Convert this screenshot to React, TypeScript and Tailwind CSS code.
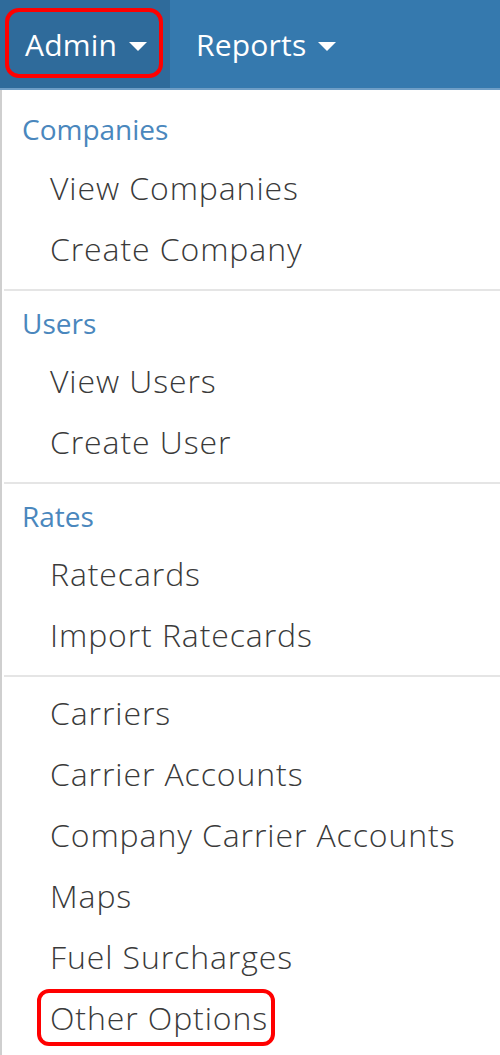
import { ReactNode } from "react";

function Caret() {
  return (
    <svg width="18" height="9" viewBox="0 0 18 9" className="ml-[12px] mt-[4px]">
      <path d="M0 0 L18 0 L9 9 Z" fill="currentColor" />
    </svg>
  );
}

function Header({ children, first }: { children: ReactNode; first?: boolean }) {
  return (
    <div
      className={`${first ? "h-[56px]" : "h-[54px]"} flex items-center pl-[20px] text-[28px] text-[#4a87bd]`}
    >
      {children}
    </div>
  );
}

function Item({ children, circled }: { children: ReactNode; circled?: boolean }) {
  return (
    <div className="h-[61px] flex items-center pl-[48px] text-[32px] tracking-[0.9px] font-light text-[#3a3a3a]">
      <span className="relative">
        {children}
        {circled && (
          <span className="absolute -left-[13px] -right-[7px] -top-[5px] -bottom-[4px] border-[4px] border-[#ff0000] rounded-[12px]" />
        )}
      </span>
    </div>
  );
}

function Divider() {
  return <div className="h-[2px] bg-[#e5e5e5] mt-[10px] mb-[5px] ml-[2px]" />;
}

export default function App() {
  return (
    <div className="w-[500px] h-[1055px] bg-white overflow-hidden font-['Open_Sans',sans-serif]">
      {/* navbar */}
      <div className="h-[90px] bg-[#3579ae] flex text-white text-[30px] tracking-[0.2px] border-b-[2px] border-[#6f9ec6]">
        <div className="relative w-[170px] bg-[#2f6b9b] flex items-center pl-[25px]">
          Admin
          <Caret />
          <span className="absolute left-[5px] top-[8px] w-[158px] h-[70px] border-[4px] border-[#ff0000] rounded-[14px]" />
        </div>
        <div className="flex items-center pl-[26px]">
          Reports
          <Caret />
        </div>
      </div>

      {/* dropdown */}
      <div className="border-l-[2px] border-[#cfcfcf] pt-[11px] pb-[10px]">
        <Header first>Companies</Header>
        <Item>View Companies</Item>
        <Item>Create Company</Item>
        <Divider />
        <Header>Users</Header>
        <Item>View Users</Item>
        <Item>Create User</Item>
        <Divider />
        <Header>Rates</Header>
        <Item>Ratecards</Item>
        <Item>Import Ratecards</Item>
        <Divider />
        <Item>Carriers</Item>
        <Item>Carrier Accounts</Item>
        <Item>Company Carrier Accounts</Item>
        <Item>Maps</Item>
        <Item>Fuel Surcharges</Item>
        <Item circled>Other Options</Item>
      </div>
    </div>
  );
}
